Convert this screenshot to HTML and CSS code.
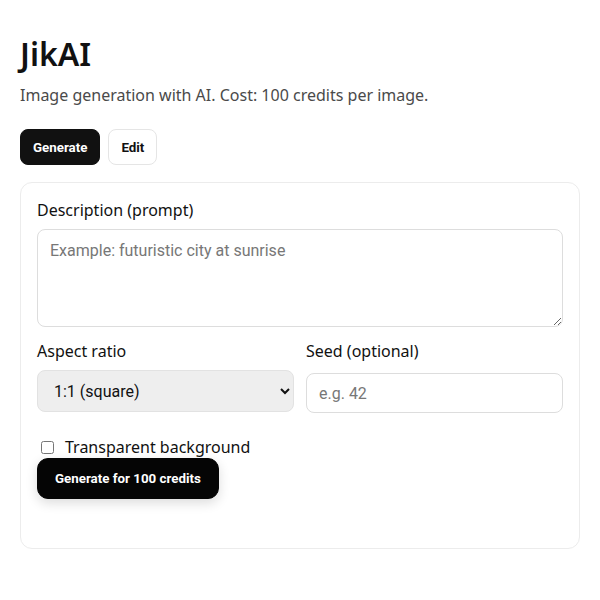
FILE: index.html
```html
<!DOCTYPE html>
<html lang="en">
<head>
<meta charset="utf-8">
<title>JikAI</title>
<link rel="stylesheet" href="styles.css">
</head>
<body>
<main class="page">
  <h1 class="title">JikAI</h1>
  <p class="subtitle">Image generation with AI. Cost: 100 credits per image.</p>
  <div class="tabs">
    <button class="tab tab-active" type="button">Generate</button>
    <button class="tab" type="button">Edit</button>
  </div>
  <form class="card">
    <label class="field">
      <span class="label">Description (prompt)</span>
      <textarea class="textarea" placeholder="Example: futuristic city at sunrise"></textarea>
    </label>
    <div class="row">
      <label class="field">
        <span class="label">Aspect ratio</span>
        <select class="select">
          <option>1:1 (square)</option>
          <option>16:9 (landscape)</option>
          <option>9:16 (portrait)</option>
        </select>
      </label>
      <label class="field">
        <span class="label">Seed (optional)</span>
        <input class="input" type="text" placeholder="e.g. 42">
      </label>
    </div>
    <label class="check">
      <input type="checkbox" class="checkbox">
      <span>Transparent background</span>
    </label>
    <div class="actions">
      <button class="submit" type="button">Generate for 100 credits</button>
    </div>
  </form>
</main>
</body>
</html>
```

FILE: styles.css
```css
* { box-sizing: border-box; }

html, body {
  margin: 0;
  background: #ffffff;
}

body {
  font-family: "Noto Sans", "Open Sans", sans-serif;
  color: #111111;
}

.page {
  padding: 32px 20px 20px;
}

.title {
  margin: 0;
  font-size: 32px;
  font-weight: 600;
  line-height: normal;
  color: #111111;
}

.subtitle {
  margin: 9px 0 0;
  font-size: 16px;
  color: #4a4a4a;
}

.tabs {
  display: flex;
  gap: 8px;
  margin-top: 23px;
}

.tab {
  font-family: Roboto, "Noto Sans", sans-serif;
  font-size: 13.33px;
  font-weight: 700;
  height: 36px;
  padding: 0 12px;
  border-radius: 8px;
  border: 1px solid #e5e5e5;
  background: #ffffff;
  color: #111111;
}

.tab-active {
  background: #111111;
  border-color: #111111;
  color: #ffffff;
}

.card {
  margin-top: 17px;
  border: 1px solid #ececec;
  border-radius: 12px;
  padding: 16px 16px 49px;
  display: flex;
  flex-direction: column;
}

.field {
  display: flex;
  flex-direction: column;
  gap: 8px;
}

.label {
  font-size: 16px;
  color: #111111;
}

.textarea {
  height: 98px;
  border: 1px solid #dddddd;
  border-radius: 8px;
  padding: 11px 12px;
  font-family: Roboto, sans-serif;
  font-size: 16px;
  color: #111111;
  resize: vertical;
}

.textarea::placeholder,
.input::placeholder {
  color: #777777;
}

.row {
  display: grid;
  grid-template-columns: 1fr 1fr;
  gap: 12px;
  margin-top: 13px;
  align-items: start;
}

.select {
  height: 42px;
  border: 1px solid #e2e2e2;
  border-radius: 8px;
  background-color: #eeeeee;
  padding: 0 12px;
  font-family: Roboto, sans-serif;
  font-size: 16px;
  color: #111111;
}

.input {
  height: 40px;
  margin-top: 3px;
  border: 1px solid #dddddd;
  border-radius: 8px;
  padding: 0 12px;
  font-family: Roboto, sans-serif;
  font-size: 16px;
  color: #111111;
  background: #ffffff;
}

.check {
  display: flex;
  align-items: center;
  gap: 11px;
  margin-top: 23px;
  font-size: 16px;
  color: #111111;
}

.checkbox {
  margin: 0 0 0 4px;
  width: 13px;
  height: 13px;
}

.actions {
  display: flex;
}

.submit {
  font-family: Roboto, sans-serif;
  font-size: 13.33px;
  font-weight: 700;
  color: #ffffff;
  background: #050505;
  border: 1px solid #050505;
  border-radius: 11px;
  height: 41px;
  padding: 0 17px;
  box-shadow: 0 4px 12px rgba(0, 0, 0, 0.14);
}
```
